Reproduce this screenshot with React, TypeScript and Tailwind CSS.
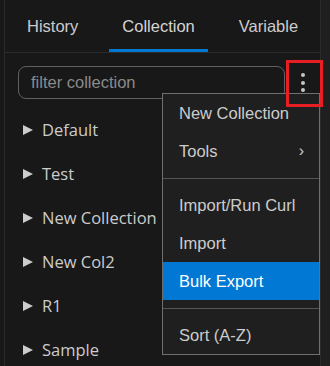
import { useState } from 'react';

const tabs = ['History', 'Collection', 'Variable'];
const collections = ['Default', 'Test', 'New Collection', 'New Col2', 'R1', 'Sample'];

type MenuEntry = { label: string; submenu?: boolean; active?: boolean } | 'sep';

const menu: MenuEntry[] = [
  { label: 'New Collection' },
  { label: 'Tools', submenu: true },
  'sep',
  { label: 'Import/Run Curl' },
  { label: 'Import' },
  { label: 'Bulk Export', active: true },
  'sep',
  { label: 'Sort (A-Z)' },
];

function Caret() {
  return (
    <svg width="10" height="10" viewBox="0 0 10 10" className="shrink-0">
      <path d="M0 0 L10 5 L0 10 Z" fill="#cccccc" />
    </svg>
  );
}

export default function App() {
  const [activeTab, setActiveTab] = useState('Collection');

  return (
    <div className="relative flex w-[330px] h-[366px] overflow-hidden bg-[#181818] font-['Liberation_Sans',Arial,sans-serif] text-[#cccccc]">
      <div className="w-[4px] shrink-0" />

      <div className="flex flex-col w-[317px] shrink-0 border-l border-r border-[#2b2b2b]">
        {/* tabs */}
        <div className="flex h-[53px] shrink-0 gap-[18px] pl-[9px] border-b border-[#2b2b2b]">
          {tabs.map((t) => (
            <button
              key={t}
              onClick={() => setActiveTab(t)}
              className={
                'flex items-center px-[13px] pt-[4px] text-[16.5px] border-b-[3px] ' +
                (activeTab === t ? 'border-[#0078d4] text-[#d4d4d4]' : 'border-transparent text-[#cccccc]')
              }
            >
              {t}
            </button>
          ))}
        </div>

        {/* filter + kebab */}
        <div className="flex items-center pt-[13px] pl-[13px]">
          <div className="flex items-center w-[267px] h-[33px] rounded-[8px] border border-[#606060] pl-[12px] text-[16.5px] text-[#8a8a8a]">
            filter collection
          </div>
          <div className="flex flex-col items-center gap-[3.5px] ml-[16px]">
            <span className="w-[4px] h-[4px] rounded-full bg-[#c5c5c5]" />
            <span className="w-[4px] h-[4px] rounded-full bg-[#c5c5c5]" />
            <span className="w-[4px] h-[4px] rounded-full bg-[#c5c5c5]" />
          </div>
        </div>

        {/* collection list */}
        <div className="flex flex-col pt-[9px] font-['Open_Sans','Noto_Sans',sans-serif]">
          {collections.map((c) => (
            <div key={c} className="flex items-center h-[44px] pl-[18px] gap-[9px] text-[16.5px] whitespace-nowrap">
              <Caret />
              <span>{c}</span>
            </div>
          ))}
        </div>
      </div>

      <div className="flex-1 bg-[#1f1f1f]" />

      {/* dropdown menu */}
      <div className="absolute left-[162px] top-[93px] w-[158px] flex flex-col border border-[#6f6f6f] bg-[#1f1f1f] text-[16.5px]">
        {menu.map((m, i) =>
          m === 'sep' ? (
            <div key={i} className="py-[7.5px]">
              <div className="h-[1px] bg-[#555555]" />
            </div>
          ) : (
            <div
              key={m.label}
              className={
                'flex items-center justify-between h-[38px] pl-[16px] pr-[15px] ' +
                (m.active ? 'bg-[#0078d4] text-white' : 'text-[#cccccc]')
              }
            >
              <span>{m.label}</span>
              {m.submenu && <span className="text-[16px]">›</span>}
            </div>
          )
        )}
      </div>

      {/* highlight box around the kebab button */}
      <div className="absolute left-[286px] top-[60px] w-[37px] h-[47px] border-[3px] border-[#e81e25]" />
    </div>
  );
}
